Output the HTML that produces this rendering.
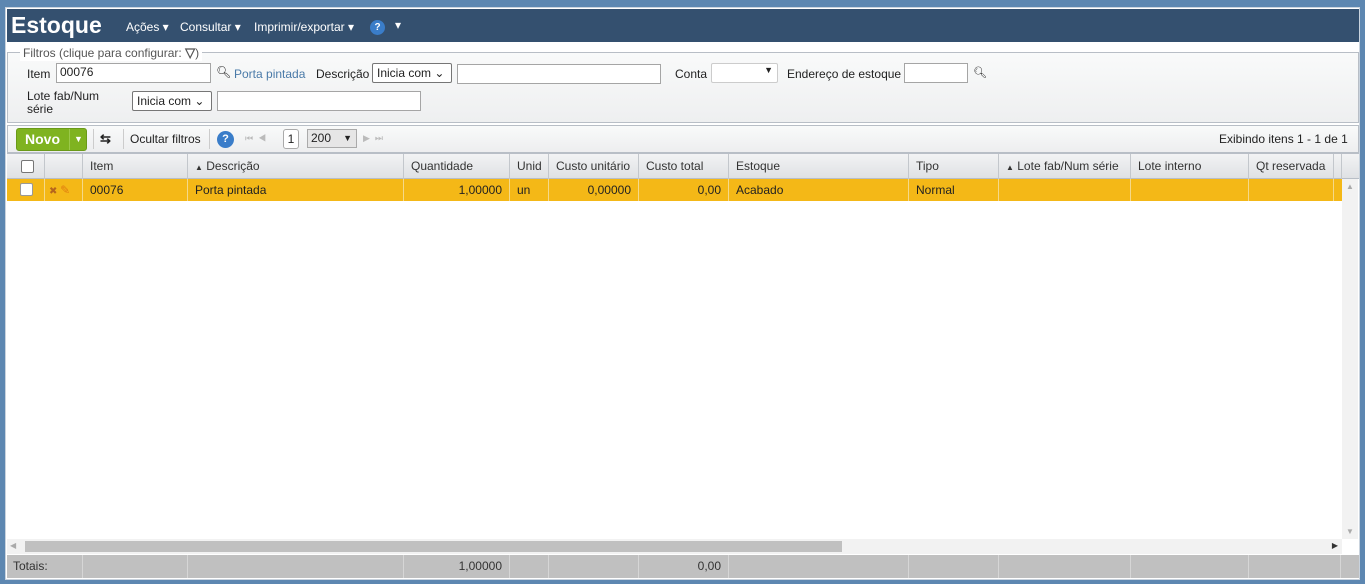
<!DOCTYPE html>
<html><head><meta charset="utf-8"><style>
*{box-sizing:border-box}
body{margin:0;width:1365px;height:584px;background:#5d87b1;font-family:"Liberation Sans",Verdana,sans-serif;font-size:12px;color:#222;position:relative;overflow:hidden}
.a{position:absolute}
.panel{left:5px;top:7px;width:1355px;height:573px;background:#fff;border:1px solid #c9d3de}
.hdr{left:7px;top:9px;width:1352px;height:33px;background:#34506f;color:#fff}
.inp{position:absolute;background:#fff;border:1px solid #a5a5a5;height:20px;font-size:12px;padding:1px 3px}
.sel{position:absolute;background:#fff;border:1px solid #767676;border-radius:2px;height:20px;font-size:12px;padding:2px 4px}
.th{position:absolute;top:0;height:25px;line-height:25px;border-right:1px solid #c3c7cc;padding-left:7px;color:#333}
.td{position:absolute;top:0;height:22px;line-height:22px;border-right:1px solid #f5d98a;padding:0 7px}
.tt{position:absolute;top:0;height:23px;border-right:1px solid #d6d6d6}
.cb{width:13px;height:13px;border:1px solid #767676;border-radius:2px;background:#fff;position:absolute}
</style></head><body>
<div class="a panel"></div>
<div class="a hdr">
 <span class="a" style="left:4px;top:3px;font-size:23px;font-weight:bold">Estoque</span>
 <span class="a" style="left:119px;top:11px;font-size:12px">Ações ▾</span>
 <span class="a" style="left:173px;top:11px;font-size:12px">Consultar ▾</span>
 <span class="a" style="left:247px;top:11px;font-size:12px">Imprimir/exportar ▾</span>
 <span class="a" style="left:363px;top:11px;width:15px;height:15px;border-radius:50%;background:#3a7dc9;font-size:10px;text-align:center;line-height:15px;font-weight:bold">?</span>
 <span class="a" style="left:388px;top:9px;font-size:12px">▾</span>
</div>
<!-- filters -->
<div class="a" style="left:7px;top:52px;width:1352px;height:71px;border:1px solid #b8bec6;background:linear-gradient(#f9fafa,#eeeff0)"></div>
<span class="a" style="left:20px;top:45px;background:#fff;padding:0 3px;color:#555;font-size:12px">Filtros (clique para configurar: <b style="font-size:13px">▽</b>)</span>
<span class="a" style="left:27px;top:67px">Item</span>
<div class="inp" style="left:56px;top:63px;width:155px">00076</div>
<span class="a" style="left:216px;top:65px;font-size:12px">🔍︎</span>
<span class="a" style="left:234px;top:67px;color:#4a7aa8">Porta pintada</span>
<span class="a" style="left:316px;top:67px">Descrição</span>
<div class="sel" style="left:372px;top:63px;width:80px">Inicia com ⌄</div>
<div class="inp" style="left:457px;top:64px;width:204px"></div>
<span class="a" style="left:675px;top:67px">Conta</span>
<div class="sel" style="left:711px;top:63px;width:67px;border-color:#ccc"><span style="position:absolute;right:4px;top:1px;font-size:9px">▼</span></div>
<span class="a" style="left:787px;top:67px">Endereço de estoque</span>
<div class="inp" style="left:904px;top:63px;width:64px"></div>
<span class="a" style="left:973px;top:66px;font-size:11px">🔍︎</span>
<span class="a" style="left:27px;top:90px;line-height:13px">Lote fab/Num<br>série</span>
<div class="sel" style="left:132px;top:91px;width:80px">Inicia com ⌄</div>
<div class="inp" style="left:217px;top:91px;width:204px"></div>
<!-- toolbar -->
<div class="a" style="left:7px;top:125px;width:1352px;height:28px;border:1px solid #b8bec6;background:linear-gradient(#f9fafa,#edeeef)"></div>
<div class="a" style="left:16px;top:128px;width:71px;height:23px;background:#7fb320;border:1px solid #6a9a18;border-radius:3px;color:#fff;font-weight:bold;font-size:14px;line-height:21px;padding-left:8px">Novo<span style="position:absolute;left:52px;top:0;width:18px;border-left:1px solid #9bc84a;text-align:center;font-size:9px">▼</span></div>
<span class="a" style="left:93px;top:129px;height:20px;border-left:1px solid #ccc"></span>
<span class="a" style="left:100px;top:131px;font-size:13px;font-weight:bold">⇆</span>
<span class="a" style="left:123px;top:129px;height:20px;border-left:1px solid #ccc"></span>
<span class="a" style="left:130px;top:132px">Ocultar filtros</span>
<span class="a" style="left:209px;top:129px;height:20px;border-left:1px solid #ccc"></span>
<span class="a" style="left:217px;top:131px;width:17px;height:17px;border-radius:50%;background:#3a7dc9;color:#fff;font-size:11px;text-align:center;line-height:17px;font-weight:bold">?</span>
<span class="a" style="left:245px;top:133px;color:#bbb;font-size:9px">⏮&nbsp;&nbsp;◀</span>
<div class="a" style="left:283px;top:129px;width:16px;height:20px;border:1px solid #aaa;border-radius:3px;background:#fff;text-align:center;line-height:18px">1</div>
<div class="a" style="left:307px;top:129px;width:50px;height:19px;border:1px solid #aaa;background:#e6e6e6;padding-left:3px;line-height:16px">200<span style="position:absolute;right:4px;font-size:9px">▼</span></div>
<span class="a" style="left:363px;top:133px;color:#bbb;font-size:9px">▶&nbsp;&nbsp;⏭</span>
<span class="a" style="left:1219px;top:132px">Exibindo itens 1 - 1 de 1</span>
<!-- header row -->
<div class="a" style="left:7px;top:153px;width:1352px;height:26px;background:linear-gradient(#f2f3f4,#dfe1e4);border-top:1px solid #b8bec6;border-bottom:1px solid #b8bec6">
<div class="th" style="left:0;width:38px"><div class="cb" style="left:14px;top:6px"></div></div>
<div class="th" style="left:38px;width:38px"></div>
<div class="th" style="left:76px;width:105px">Item</div>
<div class="th" style="left:181px;width:216px"><span style="font-size:8px">▲</span> Descrição</div>
<div class="th" style="left:397px;width:106px">Quantidade</div>
<div class="th" style="left:503px;width:39px">Unid</div>
<div class="th" style="left:542px;width:90px">Custo unitário</div>
<div class="th" style="left:632px;width:90px">Custo total</div>
<div class="th" style="left:722px;width:180px">Estoque</div>
<div class="th" style="left:902px;width:90px">Tipo</div>
<div class="th" style="left:992px;width:132px"><span style="font-size:8px">▲</span> Lote fab/Num série</div>
<div class="th" style="left:1124px;width:118px">Lote interno</div>
<div class="th" style="left:1242px;width:85px">Qt reservada</div>
<div class="th" style="left:1327px;width:8px"></div>
</div>
<!-- data row -->
<div class="a" style="left:7px;top:179px;width:1335px;height:22px;background:#f4b817">
<div class="td" style="left:0;width:38px"><div class="cb" style="left:13px;top:4px;border-color:#999"></div></div>
<div class="td" style="left:38px;width:38px;color:#b5651d;font-size:10px;padding-left:4px">✖ <span style="color:#e07d10;font-size:12px">✎</span></div>
<div class="td" style="left:76px;width:105px">00076</div>
<div class="td" style="left:181px;width:216px">Porta pintada</div>
<div class="td" style="left:397px;width:106px;text-align:right">1,00000</div>
<div class="td" style="left:503px;width:39px">un</div>
<div class="td" style="left:542px;width:90px;text-align:right">0,00000</div>
<div class="td" style="left:632px;width:90px;text-align:right">0,00</div>
<div class="td" style="left:722px;width:180px">Acabado</div>
<div class="td" style="left:902px;width:90px">Normal</div>
<div class="td" style="left:992px;width:132px"></div>
<div class="td" style="left:1124px;width:118px"></div>
<div class="td" style="left:1242px;width:85px"></div>
</div>
<!-- vscroll -->
<div class="a" style="left:1342px;top:179px;width:16px;height:360px;background:#f2f2f2"><span style="position:absolute;left:4px;top:3px;color:#aaa;font-size:8px">▲</span><span style="position:absolute;left:4px;bottom:3px;color:#aaa;font-size:8px">▼</span></div>
<!-- hscroll -->
<div class="a" style="left:7px;top:539px;width:1335px;height:15px;background:#f2f2f2"><span style="position:absolute;left:3px;top:2px;color:#aaa;font-size:8px">◀</span><div style="position:absolute;left:18px;top:2px;width:817px;height:11px;background:#c0c0c0"></div><span style="position:absolute;right:4px;top:2px;color:#333;font-size:8px">▶</span></div>
<!-- totals -->
<div class="a" style="left:7px;top:555px;width:1352px;height:23px;background:#c0c0c0;color:#333;line-height:23px">
<div class="tt" style="left:0;width:76px;padding-left:6px">Totais:</div>
<div class="tt" style="left:76px;width:105px"></div>
<div class="tt" style="left:181px;width:216px"></div>
<div class="tt" style="left:397px;width:106px;text-align:right;padding-right:7px">1,00000</div>
<div class="tt" style="left:503px;width:39px"></div>
<div class="tt" style="left:542px;width:90px"></div>
<div class="tt" style="left:632px;width:90px;text-align:right;padding-right:7px">0,00</div>
<div class="tt" style="left:722px;width:180px"></div>
<div class="tt" style="left:902px;width:90px"></div>
<div class="tt" style="left:992px;width:132px"></div>
<div class="tt" style="left:1124px;width:118px"></div>
<div class="tt" style="left:1242px;width:92px"></div>
</div>
</body></html>
